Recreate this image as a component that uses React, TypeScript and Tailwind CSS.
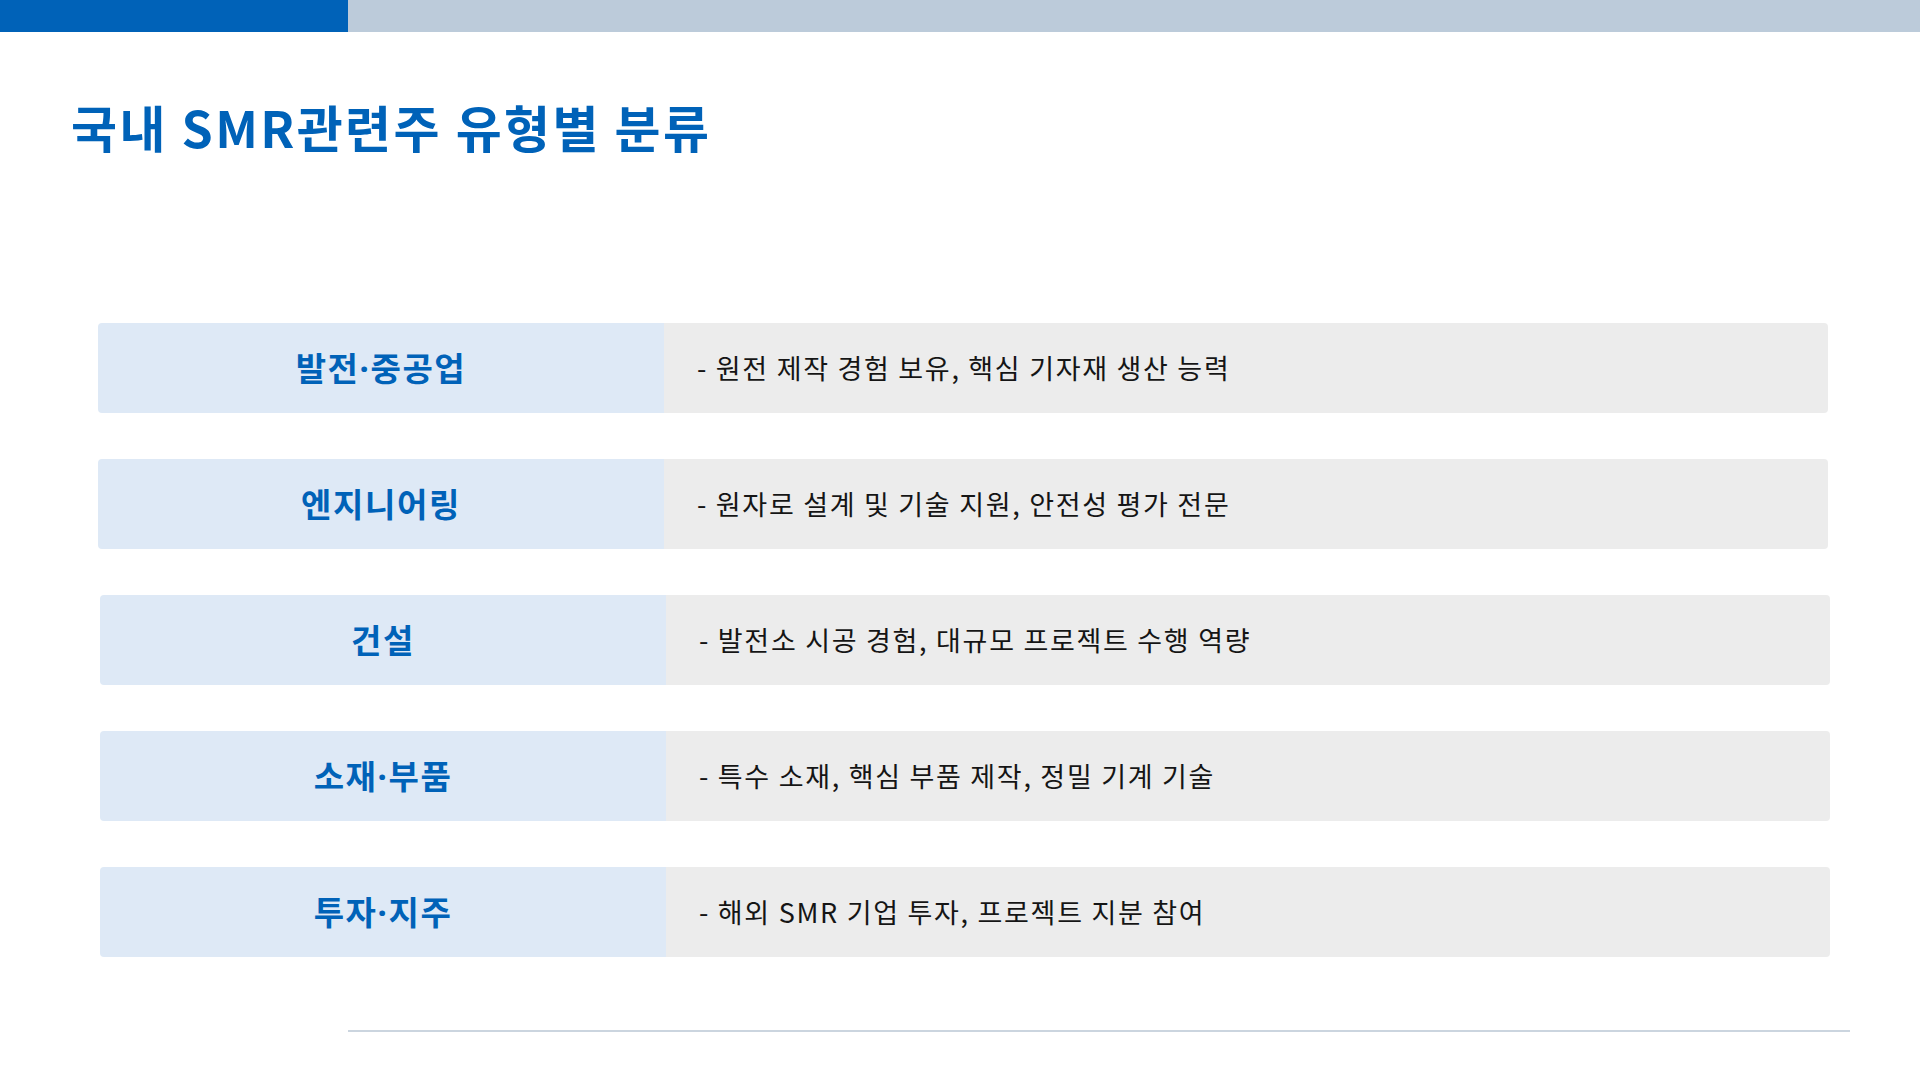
import React from 'react';

interface Category {
  label: string[];
  desc: string;
  shifted?: boolean;
}

const categories: Category[] = [
  { label: ['발전', '중공업'], desc: '- 원전 제작 경험 보유, 핵심 기자재 생산 능력' },
  { label: ['엔지니어링'], desc: '- 원자로 설계 및 기술 지원, 안전성 평가 전문' },
  { label: ['건설'], desc: '- 발전소 시공 경험, 대규모 프로젝트 수행 역량', shifted: true },
  { label: ['소재', '부품'], desc: '- 특수 소재, 핵심 부품 제작, 정밀 기계 기술', shifted: true },
  { label: ['투자', '지주'], desc: '- 해외 SMR 기업 투자, 프로젝트 지분 참여', shifted: true },
];

const font = { fontFamily: '"Noto Sans CJK KR", "Noto Sans", sans-serif' };
const latin = { fontFamily: '"Noto Sans", sans-serif' };

function CategoryRow({ item }: { item: Category }) {
  return (
    <div className={`flex h-[90px] w-[1730px] ${item.shifted ? 'ml-[100px]' : 'ml-[98px]'}`}>
      <div className="w-[566px] shrink-0 bg-[#dee9f6] rounded-l-[4px] flex items-center justify-center">
        <span className="text-[33px] font-bold text-[#0062b8] tracking-[1.6px]">
          {item.label.map((part, i) => (
            <React.Fragment key={i}>
              {i > 0 && <span style={latin}>·</span>}
              {part}
            </React.Fragment>
          ))}
        </span>
      </div>
      <div className="flex-1 bg-[#ececec] rounded-r-[4px] flex items-center pl-[33px]">
        <span className="text-[27px] text-[#151515] tracking-[1.7px]">{item.desc}</span>
      </div>
    </div>
  );
}

export default function App() {
  return (
    <div className="w-[1920px] h-[1080px] bg-white overflow-hidden flex flex-col" style={font}>
      {/* Top accent bar */}
      <div className="flex h-[32px] w-full">
        <div className="w-[348px] bg-[#0062b8]" />
        <div className="flex-1 bg-[#bccbda]" />
      </div>

      <h1 className="mt-[65px] pl-[71px] text-[50px] leading-[58px] font-bold text-[#0062b8] tracking-[2.4px]">
        국내 SMR관련주 유형별 분류
      </h1>

      <div className="mt-[168px] flex flex-col gap-[46px]">
        {categories.map((c) => (
          <CategoryRow key={c.desc} item={c} />
        ))}
      </div>

      <div className="mt-[73px] ml-[348px] w-[1502px] h-[2px] bg-[#cbd5df]" />
    </div>
  );
}
